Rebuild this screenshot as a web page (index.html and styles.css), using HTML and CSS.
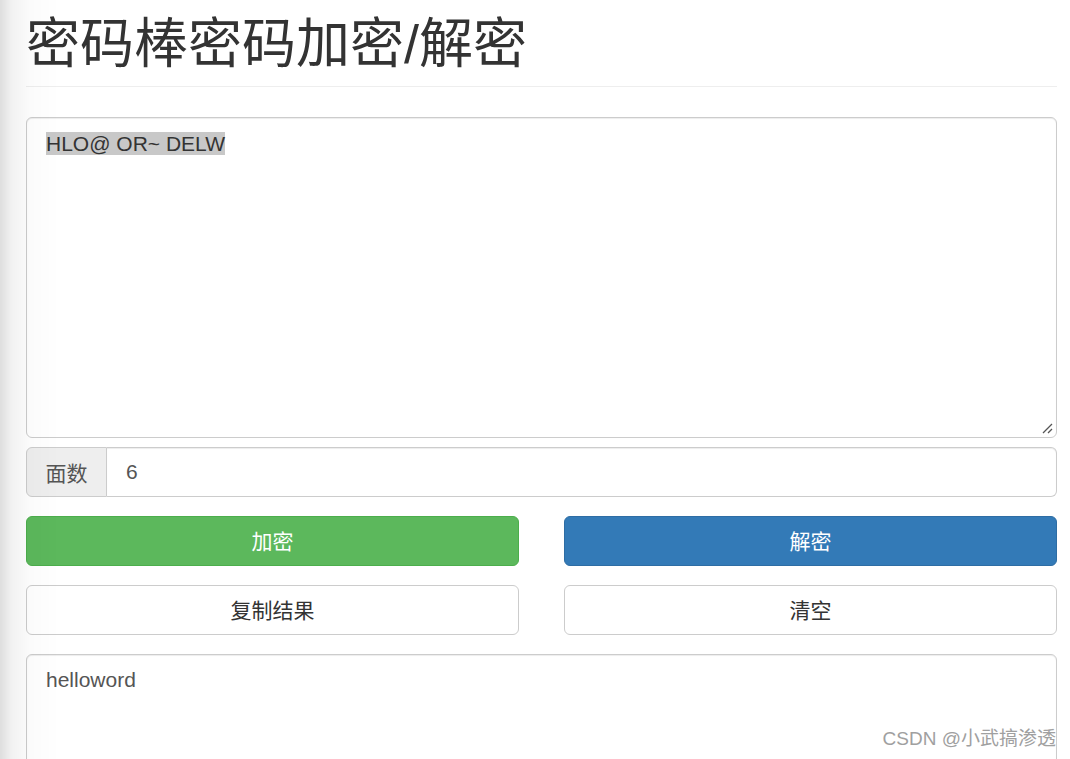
FILE: index.html
```html
<!DOCTYPE html>
<html lang="zh">
<head>
<meta charset="utf-8">
<title>密码棒密码加密/解密</title>
<link rel="stylesheet" href="styles.css">
</head>
<body>
<div class="edge-shade"></div>
<div class="container">
  <div class="page-header">
    <h1>密码棒密码加密/解密</h1>
  </div>
  <div class="form-control area area-input"><span class="sel">HLO@ OR~ DELW</span>
    <svg class="grip" width="12" height="12" viewBox="0 0 12 12"><path d="M11 2 L2 11 M11 7 L7 11" stroke="#555" stroke-width="1.3" fill="none"/></svg>
  </div>
  <div class="input-group">
    <span class="addon">面数</span>
    <span class="input-field">6</span>
  </div>
  <div class="btn-row">
    <button class="btn btn-success">加密</button>
    <button class="btn btn-primary">解密</button>
  </div>
  <div class="btn-row">
    <button class="btn btn-default">复制结果</button>
    <button class="btn btn-default">清空</button>
  </div>
  <div class="form-control area area-output">helloword</div>
</div>
<div class="watermark">CSDN @小武搞渗透</div>
</body>
</html>
```

FILE: styles.css
```css
html, body {
  margin: 0;
  padding: 0;
  background: #fff;
  height: 100%;
  overflow: hidden;
}
body {
  font-family: "Liberation Sans", "Noto Sans CJK SC", sans-serif;
  font-size: 21px;
  color: #333;
  position: relative;
}
.edge-shade {
  position: fixed;
  left: 0;
  top: 0;
  bottom: 0;
  width: 60px;
  background: linear-gradient(to right, rgba(0,0,0,0.13) 0px, rgba(0,0,0,0.05) 12px, rgba(0,0,0,0.015) 30px, rgba(0,0,0,0) 60px);
  pointer-events: none;
  z-index: 5;
}
.container {
  margin-left: 26px;
  width: 1031px;
  display: flex;
  flex-direction: column;
}
.page-header {
  padding-top: 14px;
  padding-bottom: 12px;
  border-bottom: 1px solid #eee;
  margin-bottom: 30px;
}
.page-header h1 {
  margin: 0;
  font-family: "Liberation Sans", "Noto Sans CJK SC", sans-serif;
  font-weight: 400;
  font-size: 54px;
  line-height: 60px;
  color: #333;
}
.form-control {
  box-sizing: border-box;
  border: 1px solid #ccc;
  border-radius: 6px;
  background: #fff;
  color: #555;
  box-shadow: inset 0 1px 1px rgba(0,0,0,0.075);
}
.area {
  padding: 12px 19px;
  line-height: 28px;
  position: relative;
}
.area-input {
  height: 321px;
}
.area-output {
  height: 200px;
  margin-top: 19px;
  padding-top: 11px;
}
.sel {
  background: #c8c8c8;
  color: #333;
}
.grip {
  position: absolute;
  right: 3px;
  bottom: 3px;
}
.input-group {
  margin-top: 9px;
  display: flex;
  height: 50px;
  box-sizing: border-box;
}
.addon {
  box-sizing: border-box;
  width: 81px;
  background: #eee;
  border: 1px solid #ccc;
  border-radius: 6px 0 0 6px;
  color: #555;
  display: flex;
  align-items: center;
  justify-content: center;
}
.input-field {
  flex: 1;
  box-sizing: border-box;
  border: 1px solid #ccc;
  border-left: 0;
  border-radius: 0 6px 6px 0;
  display: flex;
  align-items: center;
  padding-left: 19px;
  color: #555;
  box-shadow: inset 0 1px 1px rgba(0,0,0,0.075);
}
.btn-row {
  display: grid;
  grid-template-columns: 1fr 1fr;
  column-gap: 45px;
  margin-top: 19px;
}
.btn {
  height: 50px;
  box-sizing: border-box;
  border-radius: 6px;
  font-family: "Liberation Sans", "Noto Sans CJK SC", sans-serif;
  font-size: 21px;
  border: 1px solid transparent;
  padding: 0 0 2px 0;
}
.btn-success {
  background: #5cb85c;
  border-color: #4cae4c;
  color: #fff;
}
.btn-primary {
  background: #337ab7;
  border-color: #2e6da4;
  color: #fff;
}
.btn-default {
  background: #fff;
  border-color: #ccc;
  color: #333;
}
.watermark {
  position: absolute;
  right: 14px;
  top: 723px;
  font-family: "Liberation Sans", "Noto Sans CJK SC", sans-serif;
  font-size: 19px;
  color: #a0a0a0;
  text-shadow: 0 0 1px rgba(255,255,255,0.9);
  z-index: 6;
}
```
